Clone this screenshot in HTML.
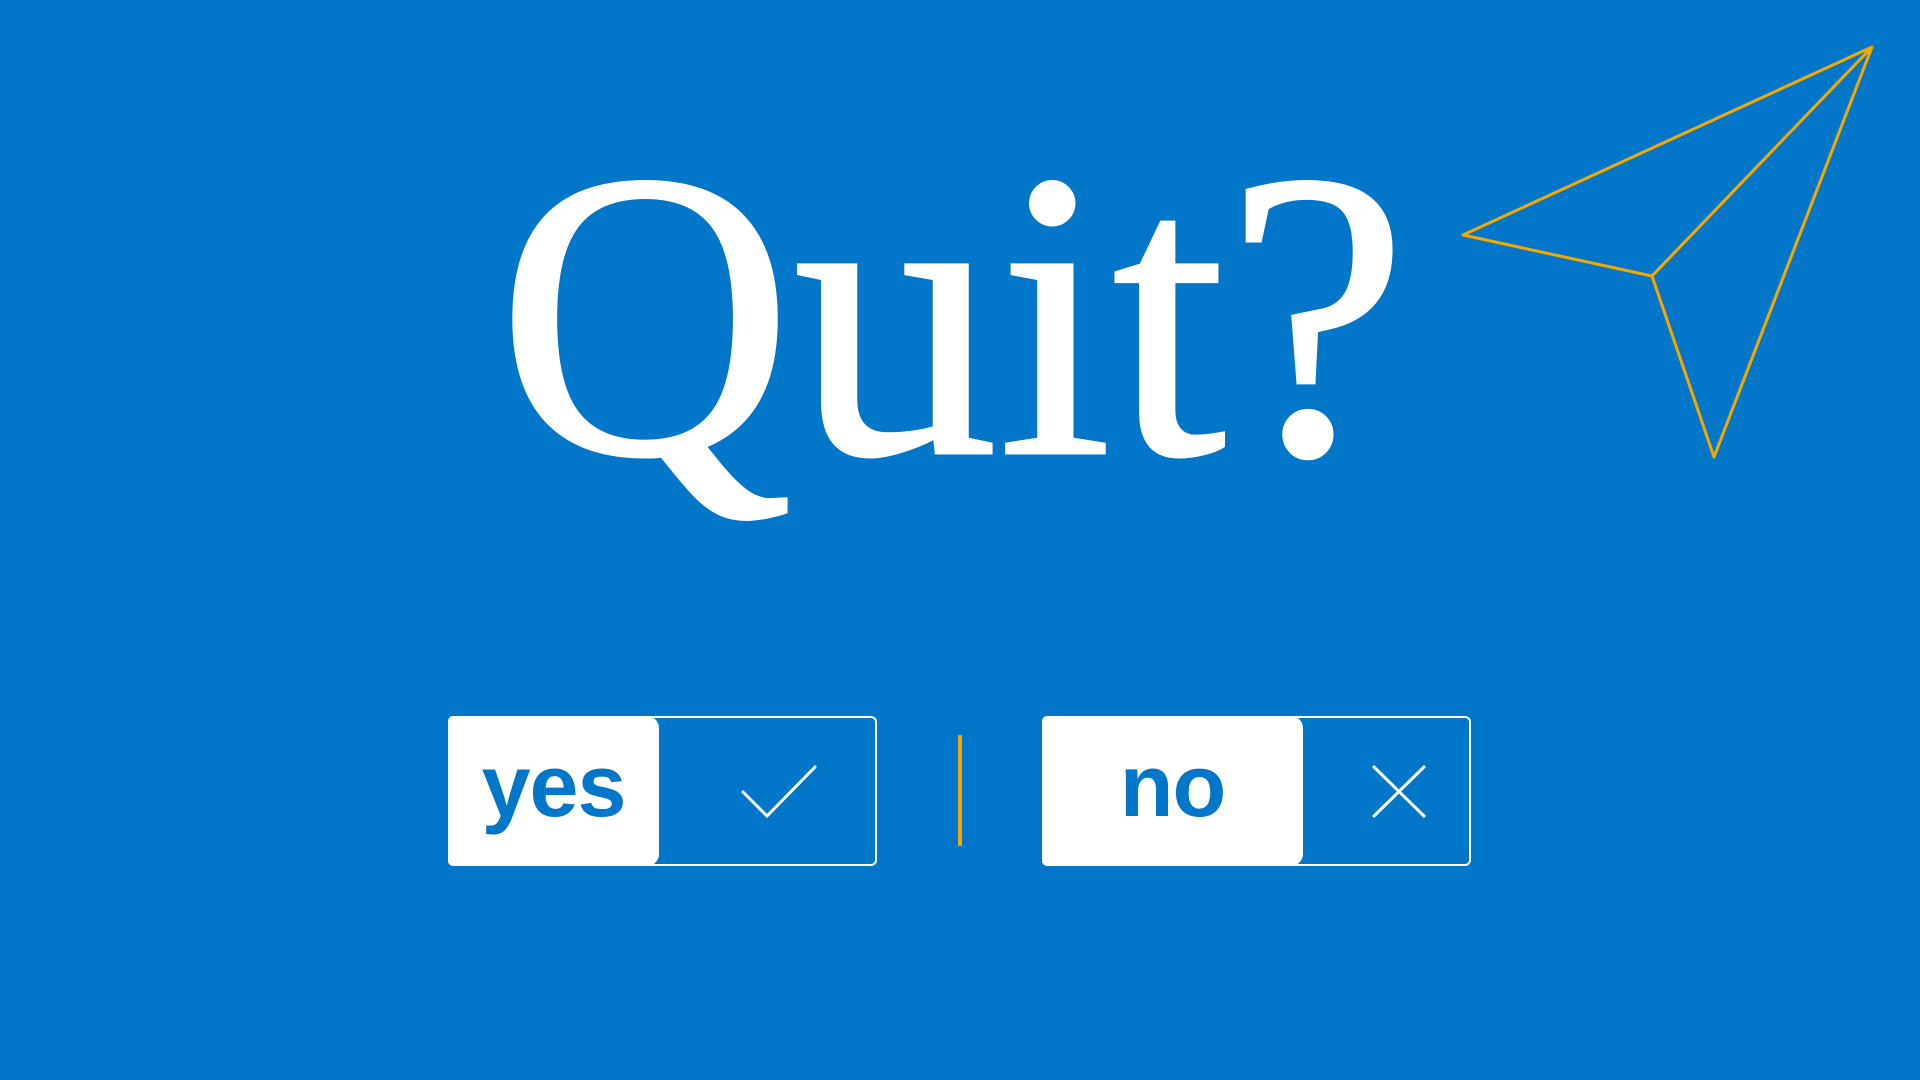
<!DOCTYPE html>
<html><head><meta charset="utf-8"><style>
html,body{margin:0;padding:0;}
body{width:1920px;height:1080px;background:#0276C9;position:relative;overflow:hidden;font-family:"Liberation Sans",sans-serif;}
.q{position:absolute;left:497px;top:315px;font-family:"Liberation Serif",serif;font-size:410px;color:#fff;line-height:0;white-space:nowrap;-webkit-text-stroke:3px #fff;}
.box{position:absolute;top:716px;height:150px;border:2px solid #fff;border-radius:6px;box-sizing:border-box;}
.fill{position:absolute;top:716px;height:150px;background:#fff;border-radius:5px 12px 12px 5px;color:#0276C9;font-weight:bold;font-size:88px;text-align:center;line-height:140px;letter-spacing:-1px;}
.sep{position:absolute;left:958px;top:735px;width:4px;height:111px;background:#F5A800;}
svg{position:absolute;left:0;top:0;}
</style></head><body>
<div class="q">Quit?</div>
<div class="box" style="left:448px;width:429px"></div>
<div class="fill" style="left:448px;width:211px">yes</div>
<div class="box" style="left:1042px;width:429px"></div>
<div class="fill" style="left:1042px;width:261px">no</div>
<div class="sep"></div>
<svg width="1920" height="1080">
<polygon points="1463,235 1872,47 1714,457 1652,276" fill="none" stroke="#F5A800" stroke-width="3" stroke-linejoin="round"/>
<line x1="1652" y1="276" x2="1872" y2="47" stroke="#F5A800" stroke-width="3"/>
<polyline points="743,792 767,816 815,767" fill="none" stroke="#fff" stroke-width="3" stroke-linecap="round"/>
<line x1="1374" y1="767" x2="1424" y2="816" stroke="#fff" stroke-width="3" stroke-linecap="round"/>
<line x1="1424" y1="767" x2="1374" y2="816" stroke="#fff" stroke-width="3" stroke-linecap="round"/>
</svg>
</body></html>
